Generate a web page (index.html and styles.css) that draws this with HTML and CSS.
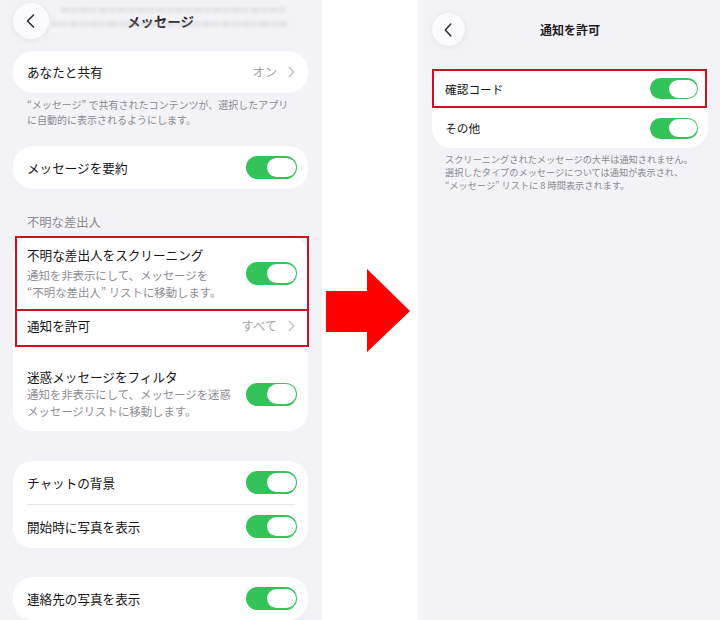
FILE: index.html
```html
<!DOCTYPE html>
<html lang="ja">
<head>
<meta charset="utf-8">
<title>メッセージ設定</title>
<link rel="stylesheet" href="styles.css">
</head>
<body>
<div class="screen left">
  <header class="nav">
    <div class="ghost" aria-hidden="true">
      <span class="gline g1"></span>
      <span class="gline g2"></span>
    </div>
    <div class="navbar">
      <span class="back"><svg width="9" height="14" viewBox="0 0 9 14"><path d="M7.5 1 L1.5 7 L7.5 13" fill="none" stroke="#2a2a2c" stroke-width="1.6" stroke-linecap="round" stroke-linejoin="round"/></svg></span>
      <h1 class="title">メッセージ</h1>
      <span class="spacer"></span>
    </div>
  </header>

  <section class="card c1">
    <div class="row h42">
      <span class="label">あなたと共有</span>
      <span class="value">オン<svg class="chev" width="7" height="12" viewBox="0 0 7 12"><path d="M1.2 1.2 L5.8 6 L1.2 10.8" fill="none" stroke="#c4c4c8" stroke-width="1.5" stroke-linecap="round" stroke-linejoin="round"/></svg></span>
    </div>
  </section>
  <p class="note">“メッセージ” で共有されたコンテンツが、選択したアプリ<br>に自動的に表示されるようにします。</p>

  <section class="card c2">
    <div class="row h43">
      <span class="label">メッセージを要約</span>
      <span class="toggle"><span class="knob"></span></span>
    </div>
  </section>

  <h2 class="section">不明な差出人</h2>
  <section class="card c3">
    <div class="row multi r1 marked">
      <div class="text">
        <div class="label">不明な差出人をスクリーニング</div>
        <div class="sub">通知を非表示にして、メッセージを<br>“不明な差出人” リストに移動します。</div>
      </div>
      <span class="toggle"><span class="knob"></span></span>
    </div>
    <div class="row r2 marked">
      <span class="label">通知を許可</span>
      <span class="value">すべて<svg class="chev" width="7" height="12" viewBox="0 0 7 12"><path d="M1.2 1.2 L5.8 6 L1.2 10.8" fill="none" stroke="#c4c4c8" stroke-width="1.5" stroke-linecap="round" stroke-linejoin="round"/></svg></span>
    </div>
    <div class="row multi r3">
      <div class="text">
        <div class="label">迷惑メッセージをフィルタ</div>
        <div class="sub">通知を非表示にして、メッセージを迷惑<br>メッセージリストに移動します。</div>
      </div>
      <span class="toggle"><span class="knob"></span></span>
    </div>
  </section>

  <section class="card c4">
    <div class="row h43">
      <span class="label">チャットの背景</span>
      <span class="toggle"><span class="knob"></span></span>
    </div>
    <div class="sep"></div>
    <div class="row h43">
      <span class="label">開始時に写真を表示</span>
      <span class="toggle"><span class="knob"></span></span>
    </div>
  </section>

  <section class="card c5">
    <div class="row h43">
      <span class="label">連絡先の写真を表示</span>
      <span class="toggle"><span class="knob"></span></span>
    </div>
  </section>
</div>

<div class="gap">
  <svg class="arrow" width="84" height="83" viewBox="0 0 84 83"><polygon points="0,22 41,22 41,0 84,42 41,83 41,63 0,63" fill="#ff0000"/></svg>
</div>

<div class="screen right">
  <header class="navbar rnav">
    <span class="back small"><svg width="8" height="14" viewBox="0 0 8 14"><path d="M6.8 1 L1.3 7 L6.8 13" fill="none" stroke="#2a2a2c" stroke-width="1.5" stroke-linecap="round" stroke-linejoin="round"/></svg></span>
    <h1 class="title small">通知を許可</h1>
    <span class="spacer small"></span>
  </header>
  <section class="card rc">
    <div class="row rr1 marked">
      <span class="label">確認コード</span>
      <span class="toggle sm"><span class="knob"></span></span>
    </div>
    <div class="row rr2">
      <span class="label">その他</span>
      <span class="toggle sm"><span class="knob"></span></span>
    </div>
  </section>
  <p class="note rnote">スクリーニングされたメッセージの大半は通知されません。<br>選択したタイプのメッセージについては通知が表示され、<br>“メッセージ” リストに 8 時間表示されます。</p>
</div>
</body>
</html>
```

FILE: styles.css
```css
html, body {
  margin: 0;
  padding: 0;
}
body {
  width: 720px;
  height: 620px;
  overflow: hidden;
  display: flex;
  background: #ffffff;
  font-family: "Noto Sans CJK JP", "Noto Sans", "Liberation Sans", sans-serif;
  color: #1c1c1e;
}

.screen {
  background: #f2f2f7;
  height: 620px;
  overflow: hidden;
  display: flex;
  flex-direction: column;
  box-sizing: border-box;
}
.left {
  width: 322px;
  padding: 0 14px 0 13px;
}
.right {
  width: 302px;
  padding: 0 12px 0 14px;
}
.gap {
  width: 96px;
  display: flex;
  align-items: center;
  justify-content: center;
}
.arrow {
  margin-right: 4px;
  display: block;
}

/* header */
.nav {
  display: grid;
  height: 44px;
}
.nav > * {
  grid-area: 1 / 1;
}
.ghost {
  display: flex;
  flex-direction: column;
  gap: 8px;
  padding-top: 7px;
  filter: blur(1.6px);
  opacity: 0.3;
}
.gline {
  display: block;
  height: 6px;
  background: repeating-linear-gradient(90deg, #c0c0c6 0 8px, #dadade 8px 10px, #c8c8cd 10px 17px, #e2e2e6 17px 19px);
}
.g1 { margin: 0 22px 0 48px; }
.g2 { margin: 0 20px 0 38px; }
.navbar {
  display: grid;
  grid-template-columns: 36px 1fr 36px;
  align-items: center;
  align-content: start;
  padding-top: 3px;
}
.back {
  width: 36px;
  height: 36px;
  border-radius: 50%;
  background: #fbfbfd;
  box-shadow: 0 1px 6px rgba(0,0,0,0.07);
  display: flex;
  align-items: center;
  justify-content: center;
}
.back svg { display: block; margin-right: 2px; }
.title {
  margin: 0;
  text-align: center;
  font-size: 13.5px;
  font-weight: 700;
  line-height: 36px;
}

.rnav {
  grid-template-columns: 33px 1fr 33px;
  padding-top: 13px;
}
.back.small {
  width: 33px;
  height: 33px;
}
.title.small {
  font-size: 12px;
  line-height: 33px;
}

/* cards */
.card {
  background: #ffffff;
  border-radius: 20px;
  flex-shrink: 0;
}
.c1 { margin-top: 7px; }
.c2 { margin-top: 19px; }
.c3 { margin-top: 6px; }
.c4 { margin-top: 30px; }
.c5 { margin-top: 29px; }

.row {
  display: flex;
  align-items: center;
  justify-content: space-between;
  padding: 0 11px 0 14px;
  box-sizing: border-box;
  position: relative;
}
.h42 { height: 42px; }
.h43 { height: 43px; }
.label {
  font-size: 12.6px;
  line-height: 18px;
  color: #151517;
}
.value {
  display: flex;
  align-items: center;
  gap: 11px;
  font-size: 12.3px;
  color: #a4a4a8;
  padding-right: 2px;
}
.chev { display: block; }

.r1 {
  height: 75px;
  padding-top: 10px;
  padding-bottom: 10px;
}
.r2 {
  height: 36px;
  padding-bottom: 7px;
}
.r3 {
  height: 84px;
  padding-top: 21px;
  padding-bottom: 11px;
}
.sub {
  font-size: 11.4px;
  line-height: 17px;
  color: #8e8e93;
}
.r1 .sub { margin-top: 3px; }

.marked::after {
  content: "";
  position: absolute;
  left: 2px;
  right: -1px;
  top: 0;
  bottom: 0;
  border: 2px solid #cc1122;
  pointer-events: none;
}
.r2.marked::after {
  top: -2px;
}

.sep {
  height: 1px;
  background: #e6e6ea;
  margin: 0 13px 0 14px;
}

/* toggles */
.toggle {
  width: 51px;
  height: 23px;
  border-radius: 12px;
  background: #34c25a;
  display: flex;
  align-items: center;
  justify-content: flex-end;
  padding: 0 1.5px;
  box-sizing: border-box;
  flex-shrink: 0;
}
.knob {
  width: 29px;
  height: 19.5px;
  border-radius: 10px;
  background: #ffffff;
}
.toggle.sm {
  width: 48px;
  height: 21px;
  border-radius: 11px;
}
.toggle.sm .knob {
  width: 28px;
  height: 18px;
  border-radius: 9px;
}

/* notes */
.note {
  margin: 4px 0 0;
  padding: 0 14px;
  font-size: 10px;
  line-height: 15px;
  color: #8a8a8f;
  white-space: nowrap;
}
.section {
  margin: 25px 0 0;
  padding: 0 14px;
  font-size: 12.3px;
  line-height: 16px;
  font-weight: 400;
  color: #8a8a8f;
}

/* right */
.rc { margin-top: 23px; }
.rc .row {
  padding: 0 10px 0 13px;
}
.rc .label { font-size: 11.7px; }
.rr1 { height: 39px; }
.rr2 { height: 40px; }
.rr1.marked::after {
  left: 0;
  right: 1px;
}
.rnote {
  margin-top: 5px;
  padding: 0 13px;
  font-size: 9.2px;
  line-height: 13px;
}
```
